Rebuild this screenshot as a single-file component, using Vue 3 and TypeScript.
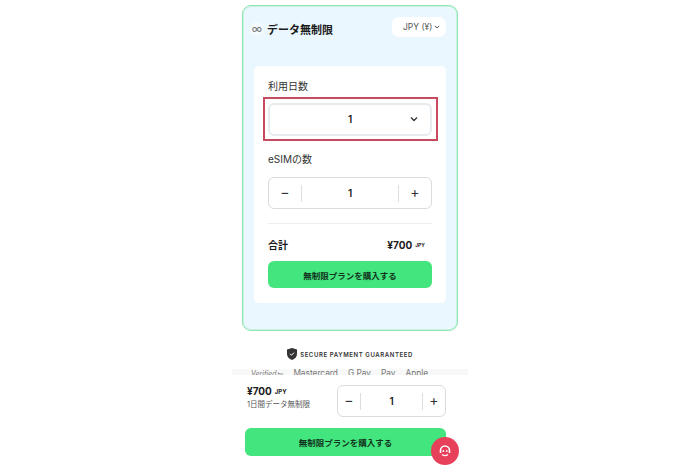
<script setup lang="ts">
const payments = ['Mastercard', 'G Pay', ' Pay', ' Apple']
</script>

<template>
  <div class="page">
    <div class="column">
      <section class="plan-card">
        <header class="plan-head">
          <h1 class="plan-title"><span class="infinity">∞</span>データ無制限</h1>
          <button class="currency">JPY (¥)
            <svg width="6" height="4" viewBox="0 0 6 4"><path d="M.8.8L3 3 5.200.8" fill="none" stroke="#555" stroke-width="1" /></svg>
          </button>
        </header>

        <div class="form-card">
          <label class="field-label">利用日数</label>
          <div class="highlight">
            <div class="select">
              <span></span>
              <span class="select-value">1</span>
              <svg class="chevron" width="8" height="6" viewBox="0 0 8 6"><path d="M1 1.500L4 4.500l3-3" fill="none" stroke="#333" stroke-width="1.300" /></svg>
            </div>
          </div>

          <label class="field-label esim-label">eSIMの数</label>
          <div class="stepper">
            <span class="step">−</span>
            <span class="count">1</span>
            <span class="step">+</span>
          </div>

          <div class="total">
            <span class="total-label">合計</span>
            <span class="price">¥700<small>JPY</small></span>
          </div>
          <button class="buy">無制限プランを購入する</button>
        </div>
      </section>

      <div class="secure">
        <svg width="10" height="12" viewBox="0 0 10 12"><path d="M5 0l5 1.600V6c0 3-2.200 5-5 6-2.800-1-5-3-5-6V1.600z" fill="#333" /><path d="M3 5.800l1.500 1.500L7 4.600" fill="none" stroke="#fff" stroke-width="1" /></svg>
        SECURE PAYMENT GUARANTEED
      </div>
      <div class="payments">
        <span class="verified">Verified<small>by</small></span>
        <span v-for="p in payments" :key="p">{{ p }}</span>
      </div>

      <footer class="bottom-bar">
        <div class="bar-row">
          <div class="bar-info">
            <div class="bar-price">¥700<small>JPY</small></div>
            <div class="bar-note">1日間データ無制限</div>
          </div>
          <div class="stepper bar-stepper">
            <span class="step">−</span>
            <span class="count">1</span>
            <span class="step">+</span>
          </div>
        </div>
        <button class="buy bar-buy">無制限プランを購入する</button>
      </footer>
    </div>

    <button class="chat" aria-label="chat">
      <svg width="12" height="12" viewBox="0 0 12 12"><path d="M1.500 8V5.500a4.500 4.500 0 0 1 9 0V8" fill="none" stroke="#fff" stroke-width="1.600" /><circle cx="4.300" cy="6" r=".9" fill="#fff" /><circle cx="7.700" cy="6" r=".9" fill="#fff" /><path d="M3 9.500c1.800 1.300 4.200 1.300 6 0" fill="none" stroke="#fff" stroke-width="1.300" /></svg>
    </button>
  </div>
</template>

<style>
html, body { margin: 0; background: #fff; }
</style>

<style scoped>
.page {
  position: relative;
  width: 700px;
  height: 467px;
  overflow: hidden;
  background: #fff;
  font-family: Inter, "Noto Sans CJK JP", sans-serif;
  color: #1b1b1b;
}

.column {
  width: 216px;
  margin: 0 auto;
  padding-top: 5px;
}

.plan-card {
  box-sizing: border-box;
  height: 326px;
  border: 1px solid #8de5b0;
  box-shadow: inset 0 0 0 1px #cdf1e2;
  border-radius: 9px;
  background: #eaf7fe;
  padding: 0 11px;
}

.plan-head {
  display: flex;
  justify-content: space-between;
  align-items: center;
  height: 46px;
  margin-bottom: 14px;
}

.plan-title {
  margin: 0;
  font-size: 11px;
  font-weight: 700;
  display: flex;
  align-items: center;
  gap: 3px;
}

.infinity {
  width: 14px;
  height: 14px;
  margin-left: -4px;
  border-radius: 50%;
  background: #f4fbff;
  text-align: center;
  line-height: 14px;
  font-size: 11px;
  font-weight: 400;
  color: #777;
}

.currency {
  display: flex;
  align-items: center;
  gap: 2px;
  box-sizing: border-box;
  width: 54px;
  height: 20px;
  margin-bottom: 5px;
  padding: 0 0 0 11px;
  border: none;
  border-radius: 7px;
  background: #fff;
  color: #555;
  font: inherit;
  font-size: 8.500px;
}

.form-card {
  box-sizing: border-box;
  height: 237px;
  padding: 14px 14px 0;
  border-radius: 5px;
  background: #fff;
}

.field-label {
  display: block;
  font-size: 10px;
  line-height: 13px;
  color: #333;
}

.highlight {
  display: flex;
  align-items: center;
  height: 40px;
  margin: 4px -6px 0 -5px;
  padding: 0 4px 0 3px;
  border: 2px solid #c84a5e;
}

.select {
  box-sizing: border-box;
  flex: 1;
  height: 33px;
  display: grid;
  grid-template-columns: 1fr auto 1fr;
  align-items: center;
  padding: 0 12px;
  border: 2px solid #e8ebee;
  border-radius: 6px;
}

.select-value {
  font-size: 10px;
  font-weight: 600;
}

.chevron {
  justify-self: end;
}

.esim-label {
  margin-top: 12px;
}

.stepper {
  box-sizing: border-box;
  display: grid;
  grid-template-columns: 32px 1fr 32px;
  align-items: center;
  height: 32px;
  margin-top: 11px;
  border: 1px solid #d9dcdf;
  border-radius: 6px;
  text-align: center;
  font-size: 10px;
  font-weight: 600;
}

.count {
  height: 17px;
  line-height: 17px;
  border-left: 1px solid #dcdfe2;
  border-right: 1px solid #dcdfe2;
}

.step {
  margin-bottom: 4px;
  font-size: 14px;
  font-weight: 400;
  color: #333;
}

.total {
  display: flex;
  justify-content: space-between;
  align-items: center;
  margin-top: 14px;
  padding: 13px 7px 0 0;
  border-top: 1px solid #eceeef;
  font-size: 10px;
  font-weight: 700;
}

.price small {
  margin-left: 3px;
  font-size: 5px;
  vertical-align: 2px;
}

.buy {
  display: block;
  width: 100%;
  height: 27px;
  margin-top: 9px;
  border: none;
  border-radius: 6px;
  background: #43e57f;
  color: #123520;
  font: inherit;
  font-size: 8.500px;
  font-weight: 700;
}

.secure {
  display: flex;
  justify-content: center;
  align-items: center;
  gap: 3px;
  height: 12px;
  margin-top: 17px;
  font-size: 6px;
  font-weight: 600;
  letter-spacing: 0.6px;
  color: #333;
}

.payments {
  display: flex;
  gap: 10px;
  height: 7px;
  margin: 9px -10px 0;
  padding-left: 19px;
  background: #f8f8f8;
  font-size: 8.300px;
  line-height: 9px;
  color: #777;
  white-space: nowrap;
  overflow: hidden;
}

.verified {
  font-style: italic;
  font-size: 7px;
}

.verified small {
  margin-left: 1px;
  font-size: 5px;
}

.bottom-bar {
  position: absolute;
  left: 232px;
  width: 236px;
  top: 375px;
  box-sizing: border-box;
  height: 92px;
  padding: 10px 22px 0 13px;
  background: #fff;
}

.bar-row {
  display: flex;
  justify-content: space-between;
  align-items: flex-start;
}

.bar-info {
  padding-left: 2px;
}

.bar-price {
  font-size: 10px;
  line-height: 12px;
  font-weight: 700;
}

.bar-price small {
  margin-left: 3px;
  font-size: 6px;
  vertical-align: 1px;
}

.bar-note {
  margin-top: 2px;
  font-size: 7.500px;
  line-height: 10px;
  color: #555;
}

.bar-stepper {
  width: 109px;
  margin: 0;
  grid-template-columns: 22px 1fr 22px;
}

.bar-buy {
  height: 28px;
  margin-top: 11px;
}

.chat {
  position: absolute;
  left: 431px;
  top: 437px;
  width: 28px;
  height: 28px;
  padding: 0;
  display: flex;
  align-items: center;
  justify-content: center;
  border: none;
  border-radius: 50%;
  background: #e6405a;
}
</style>
